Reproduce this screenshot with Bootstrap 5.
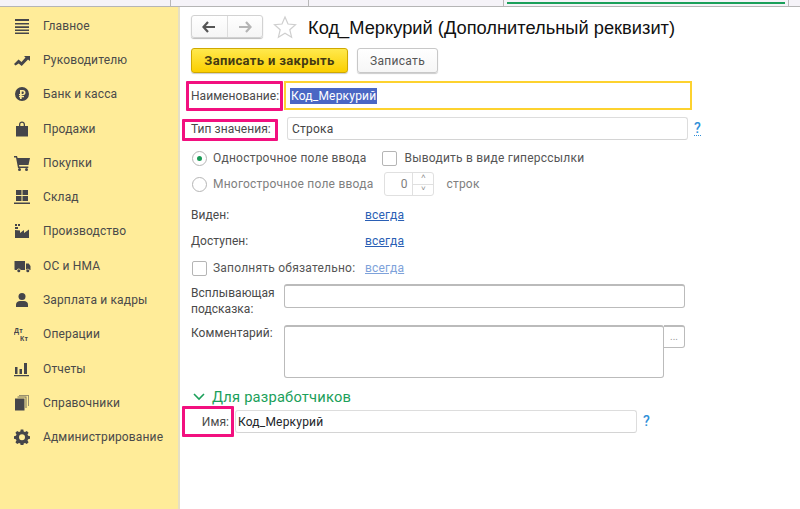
<!DOCTYPE html>
<html lang="ru">
<head>
<meta charset="utf-8">
<link rel="stylesheet" href="https://cdn.jsdelivr.net/npm/bootstrap@5.3.0/dist/css/bootstrap.min.css">
<style>
html,body{height:509px;overflow:hidden}
body{font-family:Roboto,"Liberation Sans",sans-serif;font-size:12px;color:#4a4a4a;background:#fff}
.topstrip{height:7px;background:#f5f3f8;border-bottom:1px solid #b5b5b5}
.tabsep{width:1px;background:#b8b8b8;height:6px}
.tabgreen{height:2px;background:#1ba05a;margin-top:2px}
.shell{height:502px}
.sidebar{width:180px;background:#ffec99;border-right:2px solid #e6e0c4;padding-top:1.5px;flex:none}
.sideitem{height:34.3px;padding-left:14px;gap:13px;letter-spacing:.15px;color:#4a4a4a}
.sideitem svg{width:16px;height:16px;flex:none;fill:#45454a}
.mainform{padding:8px 0 0 11px;position:relative;flex:1 1 auto;min-width:0}
.navgroup{width:72px;height:23px;border:1px solid #d2d2d2;border-radius:3px;box-shadow:0 1px 1px #bbb;background:linear-gradient(#fff,#f5f5f5)}
.navgroup>div{flex:1;height:100%}
.navgroup>div+div{border-left:1px solid #ddd}
.titletext{font-family:"Liberation Sans",sans-serif;font-size:18.3px;color:#111;margin-left:11px;padding-top:3px}
.starbox{width:24px;height:24px;margin-left:10px}
.btnmain{width:157px;height:25px;background:linear-gradient(#ffe94d,#fbcf00);border:1px solid #cfa800;border-radius:3px;font-weight:700;font-size:13px;letter-spacing:.35px;color:#443a12;padding:0;box-shadow:0 1px 1px #ccc}
.btnsec{width:81px;height:25px;background:linear-gradient(#fff,#f6f6f6);border:1px solid #c8c8c8;border-radius:3px;font-size:12px;letter-spacing:.3px;color:#555;padding:0;margin-left:9px;box-shadow:0 1px 1px #ccc}
.lbl{letter-spacing:.05px;flex:none}
.field{height:23px;border:1px solid #ddd;border-radius:3px;padding-left:4px;color:#444;letter-spacing:.2px;background:#fff;border-bottom-color:#d4d4d4;flex:none}
.focusfield{height:29px;border:2px solid #fdd22f;width:408px;padding-left:4px;letter-spacing:.2px;flex:none}
.selected{background:#4a67c4;color:#fff;line-height:16px;padding:0 1px}
.darkfield{border:1px solid #bbb;border-top-width:2px;border-radius:3px;background:#fff;flex:none}
.pinkbox{position:absolute;border:3px solid #f2107f;border-radius:1px;pointer-events:none}
.radiomark{width:15px;height:15px;border:1px solid #b5b5b5;border-radius:50%;background:#fff;flex:none;margin-left:1px}
.radiodot{width:5px;height:5px;background:#199a55;border-radius:50%}
.checkmark{width:15px;height:15px;border:1px solid #b5b5b5;border-radius:2px;background:#fff;flex:none}
.optlabel{letter-spacing:.22px;color:#555}
.dim{color:#808080}
.linkblue{color:#2a5fb5;text-decoration:underline;letter-spacing:.2px}
.linkpale{color:#7ea2da;text-decoration:underline;letter-spacing:.2px}
.hint{color:#2f8fd8;font-size:14px;font-weight:500}
.hintdot{border-bottom:1px dotted #2f8fd8;line-height:13px}
.spinbox{width:50px;height:24px;border:1px solid #e0e0e0;border-radius:3px;margin-left:11px}
.spinnum{flex:1;text-align:right;padding-right:5px;color:#808080}
.spinbtns{width:21px;height:100%;border-left:1px solid #e0e0e0;font-size:8px;color:#888;line-height:1}
.spinbtns>div{flex:1}
.spinbtns>div+div{border-top:1px solid #e0e0e0}
.dotsbtn{width:21px;height:23px;border:1px solid #bbb;border-left:0;border-top-width:2px;border-radius:0 3px 3px 0;color:#999;font-size:10px;line-height:1;background:#fff}
.grouptitle{color:#1ba05a;font-size:14.7px;letter-spacing:.2px;margin-left:6px}
</style>
</head>
<body>
<div class="topstrip d-flex">
  <div style="width:170px"></div><div class="tabsep"></div>
  <div style="width:137px"></div><div class="tabsep"></div>
  <div style="width:194px"></div><div class="tabsep"></div>
  <div class="tabgreen" style="width:278px;margin-left:3px"></div>
  <div style="width:3px"></div><div class="tabsep"></div>
</div>
<div class="shell d-flex">
  <nav class="sidebar">
    <div class="sideitem d-flex align-items-center"><svg viewBox="0 0 16 16"><path d="M1 1h14v2H1zM1 5h14v1.600H1zM1 8.300h14v1.600H1zM1 11.500h14v1.600H1zM1 14.400h14V16H1z"/></svg><span>Главное</span></div>
    <div class="sideitem d-flex align-items-center"><svg viewBox="0 0 16 16"><path d="M0 12l4.500-4.500 3 2.500 4-4.500L10 4h6v5l-2-1.500-6.300 6.500-3-2.500L1.500 13.500z"/></svg><span>Руководителю</span></div>
    <div class="sideitem d-flex align-items-center"><svg viewBox="0 0 16 16"><path fill-rule="evenodd" d="M8 1a7 7 0 1 1 0 14A7 7 0 0 1 8 1zM6 4v4H5v1.300h1V10H5v1.300h1V13h1.700v-1.700H10V10H7.700v-.7h1.100C10.500 9.300 11.500 8.300 11.500 6.600 11.500 5 10.500 4 8.800 4zM7.700 5.400h1c.8 0 1.100.4 1.100 1.200S9.500 8 8.700 8h-1z"/></svg><span>Банк и касса</span></div>
    <div class="sideitem d-flex align-items-center"><svg viewBox="0 0 16 16"><path fill-rule="evenodd" d="M2 5h3V3.500C5 1.800 6.300.5 8 .5s3 1.300 3 3V5h3v10.500H2zM6.300 5h3.400V3.500C9.700 2.500 9 1.800 8 1.800s-1.700.7-1.700 1.700z"/></svg><span>Продажи</span></div>
    <div class="sideitem d-flex align-items-center"><svg viewBox="0 0 16 16"><path d="M0 1h3l.6 2H16l-1.500 7H5l.3 1.500h9V13H4L2 2.500H0z"/><circle cx="5.500" cy="14.500" r="1.500"/><circle cx="12.500" cy="14.500" r="1.500"/></svg><span>Покупки</span></div>
    <div class="sideitem d-flex align-items-center"><svg viewBox="0 0 16 16"><path d="M2 1h5.500v5H2zM8.500 1H14v5H8.500zM2 7h5.500v5H2zM8.500 7H14v5H8.500zM0 13.500h16V15H0z"/></svg><span>Склад</span></div>
    <div class="sideitem d-flex align-items-center"><svg viewBox="0 0 16 16"><path d="M1 1h2v2H1zM4 1h2v2H4zM1 4h3v2H1zM1 7l5 .5V10l4-3v3l5-3.500V15H1z"/></svg><span>Производство</span></div>
    <div class="sideitem d-flex align-items-center"><svg viewBox="0 0 16 16" style="width:17px;margin-right:-1px"><path d="M0 3h10.500v9H6.200a2 2 0 0 0-3.900 0H.6L0 11.500zM11.500 5.500h2.700L16 8v4h-.8a2 2 0 0 0-3.700 0z"/><circle cx="4.300" cy="12.800" r="1.500"/><circle cx="13.300" cy="12.800" r="1.500"/></svg><span>ОС и НМА</span></div>
    <div class="sideitem d-flex align-items-center"><svg viewBox="0 0 16 16"><circle cx="8" cy="4.500" r="3.500"/><path d="M2 15v-2.500C2 10.500 4 9 6 9h4c2 0 4 1.500 4 3.500V15z"/></svg><span>Зарплата и кадры</span></div>
    <div class="sideitem d-flex align-items-center"><svg viewBox="0 0 16 16"><text x="0" y="7" font-size="7" font-weight="700" font-family="Liberation Sans">Дт</text><text x="6" y="15" font-size="7" font-weight="700" font-family="Liberation Sans">Кт</text></svg><span>Операции</span></div>
    <div class="sideitem d-flex align-items-center"><svg viewBox="0 0 16 16"><path d="M1 6h2.500v7H1zM5.500 8H8v5H5.500zM10 2h3v11h-3zM0 14h15v1.200H0z"/></svg><span>Отчеты</span></div>
    <div class="sideitem d-flex align-items-center"><svg viewBox="0 0 16 16"><path opacity=".55" d="M5 0h10v11h-1V1H5z"/><path opacity=".75" d="M3.500 1.500h9v11.500h-1V2.500h-8z"/><path d="M1 3.500h9.500V15.500H1z"/></svg><span>Справочники</span></div>
    <div class="sideitem d-flex align-items-center"><svg viewBox="0 0 16 16"><path fill-rule="evenodd" d="M6.700 1h2.600l.4 2 1.300.6 1.800-1.100 1.800 1.800-1.100 1.800.6 1.300 2 .4v2.600l-2 .4-.6 1.300 1.100 1.800-1.800 1.800-1.800-1.100-1.300.6-.4 2H6.700l-.4-2-1.300-.6-1.800 1.100-1.800-1.800 1.100-1.800-.6-1.300-2-.4V7.800l2-.4.6-1.300-1.100-1.800 1.800-1.800 1.800 1.100 1.300-.6zM8 5.800a3 3 0 1 0 0 6 3 3 0 0 0 0-6z" transform="translate(0 -.6)"/></svg><span>Администрирование</span></div>
  </nav>
  <main class="mainform">
    <div class="d-flex align-items-center" style="height:23px">
      <div class="navgroup d-flex">
        <div class="d-flex align-items-center justify-content-center"><svg width="14" height="12" viewBox="0 0 14 12"><path d="M6 1L1.500 6 6 11M2 6h11" fill="none" stroke="#555" stroke-width="2.200"/></svg></div>
        <div class="d-flex align-items-center justify-content-center"><svg width="14" height="12" viewBox="0 0 14 12"><path d="M8 1l4.500 5L8 11M12 6H1" fill="none" stroke="#b5b5b5" stroke-width="2.200"/></svg></div>
      </div>
      <div class="starbox"><svg width="24" height="24" viewBox="0 0 24 24"><path d="M12 2l3 7 7.500.7-5.700 5 1.800 7.500L12 18.300 5.400 22.200l1.800-7.500-5.700-5L9 9z" fill="#fff" stroke="#cfcfcf" stroke-width="1.200"/></svg></div>
      <div class="titletext">Код_Меркурий (Дополнительный реквизит)</div>
    </div>
    <div class="d-flex" style="margin-top:10px">
      <button type="button" class="btn btnmain">Записать и закрыть</button>
      <button type="button" class="btn btnsec">Записать</button>
    </div>
    <div class="d-flex align-items-center" style="height:29px;margin-top:8px">
      <div class="lbl" style="width:93px">Наименование:</div>
      <div class="focusfield d-flex align-items-center"><span class="selected">Код_Меркурий</span></div>
    </div>
    <div class="d-flex align-items-center" style="height:23px;margin-top:7px">
      <div class="lbl" style="width:96px">Тип значения:</div>
      <div class="field d-flex align-items-center" style="width:401px">Строка</div>
      <div class="hint hintdot" style="margin-left:6px">?</div>
    </div>
    <div class="d-flex align-items-center" style="height:20px;margin-top:8px">
      <div class="radiomark d-flex align-items-center justify-content-center"><div class="radiodot"></div></div>
      <div class="optlabel" style="margin-left:6px">Однострочное поле ввода</div>
      <div class="checkmark" style="margin-left:16px"></div>
      <div class="optlabel" style="margin-left:7px">Выводить в виде гиперссылки</div>
    </div>
    <div class="d-flex align-items-center" style="height:24px;margin-top:4px">
      <div class="radiomark"></div>
      <div class="optlabel dim" style="margin-left:6px">Многострочное поле ввода</div>
      <div class="spinbox d-flex align-items-center">
        <div class="spinnum">0</div>
        <div class="spinbtns d-flex flex-column text-center"><div>˄</div><div>˅</div></div>
      </div>
      <div class="dim optlabel" style="margin-left:12px">строк</div>
    </div>
    <div class="d-flex align-items-center" style="height:20px;margin-top:9px">
      <div class="lbl" style="width:174px">Виден:</div><a class="linkblue" href="#">всегда</a>
    </div>
    <div class="d-flex align-items-center" style="height:20px;margin-top:6px">
      <div class="lbl" style="width:174px">Доступен:</div><a class="linkblue" href="#">всегда</a>
    </div>
    <div class="d-flex align-items-center" style="height:20px;margin-top:7px">
      <div class="checkmark" style="margin-left:1px"></div>
      <div class="optlabel" style="width:152px;margin-left:6px">Заполнять обязательно:</div><a class="linkpale" href="#">всегда</a>
    </div>
    <div class="d-flex" style="margin-top:6px">
      <div class="lbl" style="width:93px;line-height:16px;padding-top:1px">Всплывающая<br>подсказка:</div>
      <div class="darkfield" style="width:401px;height:24px"></div>
    </div>
    <div class="d-flex" style="margin-top:8px">
      <div class="lbl" style="width:93px;line-height:16px">Комментарий:</div>
      <div class="darkfield" style="width:380px;height:53px"></div>
      <div class="dotsbtn d-flex align-items-center justify-content-center">...</div>
    </div>
    <div class="d-flex align-items-center" style="height:20px;margin-top:9px">
      <svg width="14" height="10" viewBox="0 0 14 10" style="margin-left:1px"><path d="M2 2l5 5 5-5" fill="none" stroke="#1ba05a" stroke-width="1.600"/></svg>
      <div class="grouptitle">Для разработчиков</div>
    </div>
    <div class="d-flex align-items-center" style="height:23px;margin-top:3px">
      <div class="lbl text-end" style="width:38px">Имя:</div>
      <div class="field d-flex align-items-center text-dark" style="width:402px;padding-left:2px;margin-left:6px">Код_Меркурий</div>
      <div class="hint" style="margin-left:6px">?</div>
    </div>
    <div class="pinkbox" style="left:6px;top:74px;width:97px;height:30px"></div>
    <div class="pinkbox" style="left:2px;top:112px;width:96px;height:22px"></div>
    <div class="pinkbox" style="left:2px;top:399px;width:52px;height:31px"></div>
  </main>
</div>
<script src="https://cdn.jsdelivr.net/npm/bootstrap@5.3.0/dist/js/bootstrap.bundle.min.js"></script>
</body>
</html>
